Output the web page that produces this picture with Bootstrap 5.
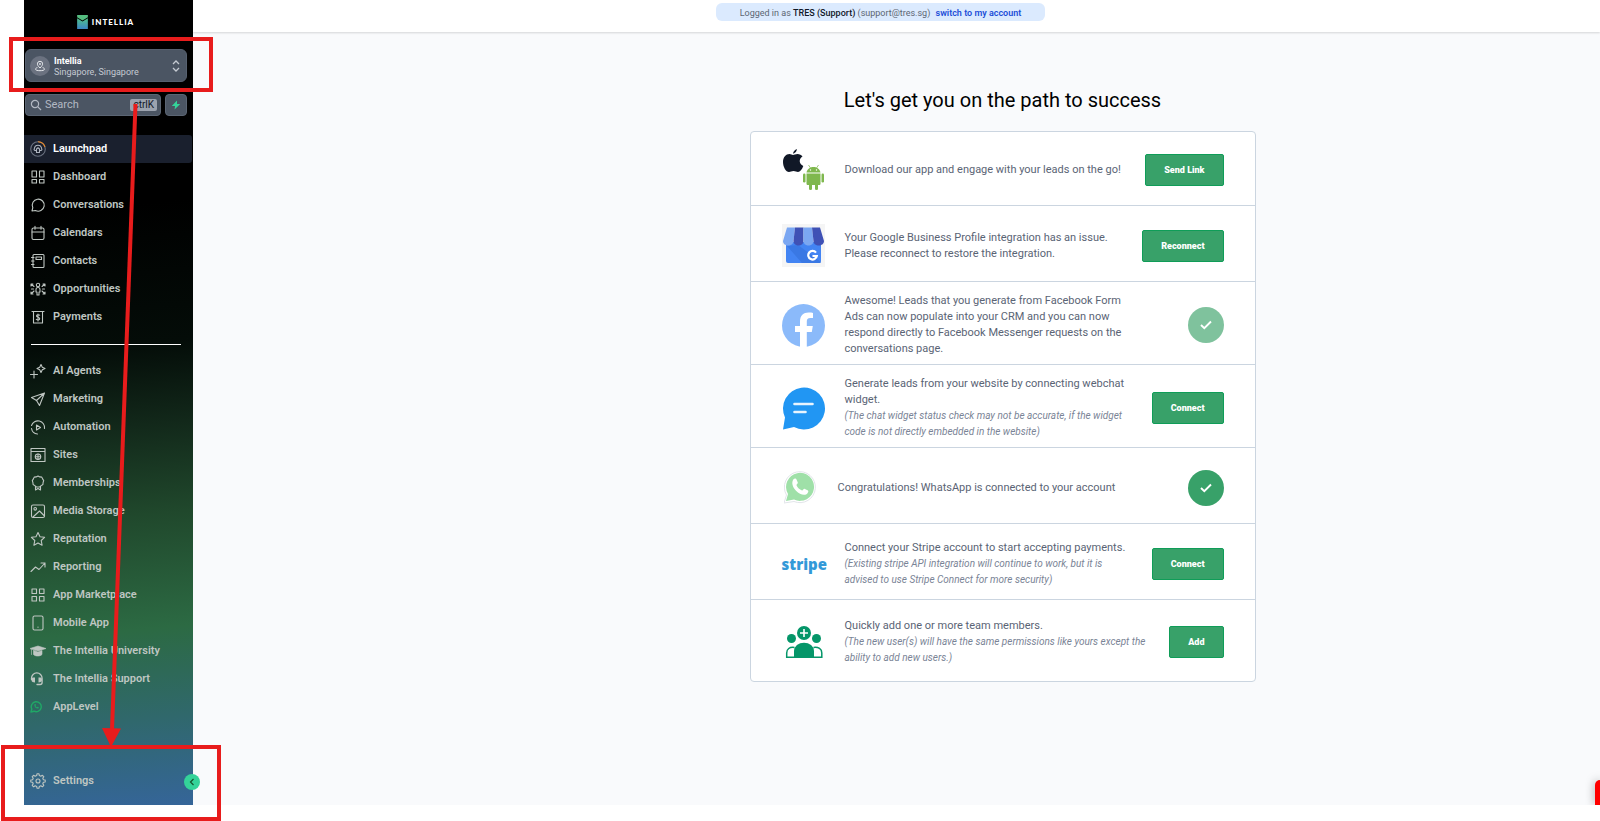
<!DOCTYPE html>
<html lang="en">
<head>
<meta charset="utf-8">
<meta name="viewport" content="width=device-width, initial-scale=1">
<title>Intellia – Launchpad</title>
<link href="https://cdn.jsdelivr.net/npm/bootstrap@5.3.0/dist/css/bootstrap.min.css" rel="stylesheet">
<style>
  body { font-family: Roboto, "Liberation Sans", sans-serif; background: #fff; font-size: 11px; }
  svg { display: block; flex-shrink: 0; }
  .app-shell { min-height: calc(100vh - 16px); padding-left: 24px; }

  /* Sidebar */
  .side-bar { width: 169px; background: linear-gradient(175deg, #000 0%, #000 26%, #040c08 43%, #12281a 53%, #20482c 64%, #2c6a43 78%, #30686c 89%, #356599 100%); }
  .brand-row { height: 49px; padding: 14px 6px 0 0; }
  .brand-text { color: #fff; font: 900 8px/16px Lato, sans-serif; letter-spacing: 1px; }
  .acct-btn { height: 33px; margin: 0 6px 0 1px; padding: 1px 6px 0 4px; background: #4b5563; border: 1px solid #56606f; border-radius: 6px; color: #c5cad2; font-size: 9px; line-height: 11px; text-align: left; }
  .acct-btn b { color: #fff; font-weight: 700; }
  .acct-name { padding-top: 2px; }
  .acct-pin { width: 20px; height: 20px; border-radius: 50%; background: #6b7280; }
  .find-row { margin: 12px 6px 0 1px; gap: 4px; }
  .find-box { height: 22px; background: #4b5563; border: 1px solid #5b6573; border-radius: 4px; padding: 0 3px 0 4px; min-width: 0; }
  .find-box input { min-width: 0; width: 60px; background: none; border: 0; outline: 0; padding: 0 0 0 3px; color: #fff; font-size: 11px; line-height: 16px; }
  .find-box input::placeholder { color: #b3b9c3; opacity: 1; }
  .find-box kbd { background: #9ca3af; color: #111827; font: 10px/12px Roboto, sans-serif; padding: 0 3px; border-radius: 2px; }
  .bolt-btn { width: 22px; height: 22px; background: #4b5563; border: 1px solid #5b6573; border-radius: 4px; padding: 0; }
  .menu-list { margin-top: 19px; }
  .menu-item { display: flex; align-items: center; height: 28px; padding-left: 6px; gap: 7px; color: #bfc6c2; text-decoration: none; font-size: 11px; font-weight: 600; line-height: 16px; white-space: nowrap; }
  .menu-item svg { width: 16px; height: 16px; fill: none; stroke: currentColor; stroke-width: 1.1; stroke-linecap: round; stroke-linejoin: round; }
  .menu-item.current { background: #1a202e; color: #fff; border-radius: 0 3px 3px 0; margin-right: 1px; }
  .menu-rule { border: 0; border-top: 1px solid #fff; opacity: 1; margin: 13px 12px 12px 7px; }
  .menu-foot { margin: auto 0 10px; }
  .fold-btn { position: absolute; right: -7px; bottom: 15px; width: 16px; height: 16px; padding: 0; border: 0; border-radius: 50%; background: #34d399; }

  /* Main area */
  .main-area { background: #f9fafc; }
  .top-strip { height: 32px; background: #fff; box-shadow: 0 1px 2px rgba(0,0,0,.15); padding: 3px 32px 0 0; }
  .login-pill { height: 18px; padding: 0 24px; background: #dbeafe; border-radius: 6px; font-size: 9px; line-height: 20px; color: #5c6672; }
  .login-pill b { color: #111827; font-weight: 500; }
  .login-pill a { color: #1d4ed8; font-weight: 600; text-decoration: none; margin-left: 3px; }
  .stage { padding-left: 212px; }
  .stage h1 { font-size: 20px; font-weight: 400; line-height: 24px; color: #000; margin: 56px 0 19px; }
  .step-card { width: 506px; max-width: 100%; background: #fff; border: 1px solid #cbd5e0; border-radius: 4px; }
  .step { min-height: 76px; padding: 4px 31px 0; border-bottom: 1px solid #cbd5e0; }
  .step.slim { min-height: 74px; padding-top: 2px; }
  .step.tall { min-height: 83px; }
  .step:last-child { border-bottom: 0; min-height: 81px; padding-top: 2px; }
  .step-pic { width: 43px; margin-right: 20px; flex-shrink: 0; }
  .step-text { width: 292px; margin: 0; font-size: 11px; line-height: 16px; color: #5a6475; }
  .step-text.roomy { width: 304px; }
  .step-text em { display: block; font-size: 10px; color: #7a8496; }
  .act-btn { height: 32px; padding: 0 18px; border: 1px solid #0f9d58; background: #38a169; color: #fff; border-radius: 2px; font-size: 9px; font-weight: 900; line-height: 28px; }
  .done-dot { width: 36px; height: 36px; border-radius: 50%; background: #38a169; }
  .faded { background: #7fc29d; }
  .chat-mark { margin: 0 18px 0 2px; }
  .stripe-word { font: 800 15px/20px "Open Sans", sans-serif; color: #3399d8; }

  /* Callouts drawn over the page */
  .callout { position: absolute; border: 4px solid #e81c1c; pointer-events: none; }
  .callout-a { left: 9px; top: 37px; width: 204px; height: 55px; }
  .callout-b { left: 1px; bottom: 0; width: 220px; height: 76px; }
  .callout-arrow { position: absolute; left: 100px; top: 100px; pointer-events: none; }
  .chat-tab { position: absolute; right: 0; bottom: 0; width: 5px; height: 25px; background: #f00; border-radius: 5px 0 0 0; box-shadow: 0 0 10px rgba(0,0,0,.4); clip-path: inset(-20px 0 0 -20px); }
</style>
</head>
<body>
<div class="position-relative min-vh-100">
<div class="app-shell d-flex position-relative">
  <aside class="side-bar d-flex flex-column flex-shrink-0 position-relative">
    <div class="brand-row d-flex justify-content-center align-items-start">
      <svg width="11" height="15" viewBox="0 0 10 14" class="me-1"><defs><linearGradient id="lg" x1="0" y1="0" x2="0" y2="1"><stop offset="0" stop-color="#4fc28a"/><stop offset="1" stop-color="#3d86c6"/></linearGradient></defs><path d="M0 1h10v2L5 6 0 3z" fill="#55bd80"/><path d="M0 4l5 3 5-3v10H0z" fill="url(#lg)"/></svg>
      <span class="brand-text">INTELLIA</span>
    </div>
    <button type="button" class="acct-btn d-flex align-items-center">
      <span class="acct-pin d-flex align-items-center justify-content-center me-1"><svg width="12" height="12" viewBox="0 0 12 12" fill="none" stroke="#e5e7eb"><path d="M6 8C4 6 3.400 5 3.400 3.900a2.600 2.600 0 0 1 5.200 0C8.600 5 8 6 6 8z"/><circle cx="6" cy="4" r=".6"/><path d="M3.400 7.500C2 8 1.500 8.500 1.500 9.200c0 1 2 1.500 4.500 1.500s4.500-.5 4.500-1.500c0-.7-.5-1.200-1.900-1.700"/></svg></span>
      <span class="acct-name flex-grow-1"><b class="d-block">Intellia</b>Singapore, Singapore</span>
      <svg width="8" height="12" viewBox="0 0 8 12" fill="none" stroke="#c5cad2" stroke-width="1.300"><path d="M1 4l3-3 3 3M1 8l3 3 3-3"/></svg>
    </button>
    <div class="find-row d-flex">
      <label class="find-box d-flex align-items-center flex-grow-1">
        <svg width="12" height="12" viewBox="0 0 12 12" fill="none" stroke="#b3b9c3" stroke-width="1.200"><circle cx="5" cy="5" r="3.600"/><path d="M7.700 7.700L11 11"/></svg>
        <input type="text" placeholder="Search" aria-label="Search">
        <kbd class="ms-auto">ctrlK</kbd>
      </label>
      <button type="button" class="bolt-btn d-flex align-items-center justify-content-center" aria-label="Quick actions"><svg width="10" height="10" viewBox="0 0 10 10"><path d="M6 .5L.8 6H4l-.4 3.500L9.200 4H6z" fill="#34d399"/></svg></button>
    </div>

    <nav class="menu-list" aria-label="Main">
      <a href="#" class="menu-item current"><svg viewBox="0 0 16 16"><circle cx="8" cy="8" r="7.300" stroke="#6b7280"/><path d="M8.500.7A7.300 7.300 0 0 1 14.800 5.500" stroke="#f08a24"/><path d="M6.500 9.500H5a1 1 0 0 1-.8-1.300C4.500 6 6 4.300 8 4.300S11.500 6 11.800 8.200A1 1 0 0 1 11 9.500H9.500M6.500 8v3.500h3V8L8 6.800z" stroke="#aeb4bf"/></svg>Launchpad</a>
      <a href="#" class="menu-item"><svg viewBox="0 0 16 16"><path d="M2 2h4.500v6H2zM9.500 2H14v6H9.500zM2 10.500h4.500V14H2zM9.500 10.500H14V14H9.500z"/></svg>Dashboard</a>
      <a href="#" class="menu-item"><svg viewBox="0 0 16 16"><path d="M2 14l.8-3.300A6 6 0 1 1 5.500 13.500z"/></svg>Conversations</a>
      <a href="#" class="menu-item"><svg viewBox="0 0 16 16"><rect x="2" y="3" width="12" height="11.500" rx="1.500"/><path d="M2 7h12M5 1.200v3M11 1.200v3"/></svg>Calendars</a>
      <a href="#" class="menu-item"><svg viewBox="0 0 16 16"><rect x="3" y="1.500" width="11" height="13" rx="1"/><path d="M6 4h5.500v2.500H6zM1.500 4.500H4M1.500 8H4M1.500 11.500H4"/></svg>Contacts</a>
      <a href="#" class="menu-item"><svg viewBox="0 0 16 16"><circle cx="8" cy="4" r="1.700"/><path d="M6 11V8.500a2 2 0 0 1 4 0V11H9v3H7v-3zM1 5V3h2M1 3l3 2.500M15 5V3h-2M15 3l-3 2.500M1 11v2h2M1 13l3-3M15 11v2h-2M15 13l-3-3M1.500 8h2M12.500 8h2"/></svg>Opportunities</a>
      <a href="#" class="menu-item"><svg viewBox="0 0 16 16"><path d="M2 2.500h12M3.500 2.500v11.500h9V2.500M9.700 6.200C9 5.600 6.500 5.500 6.500 7S9.700 8 9.700 9.700 7 11 6.300 10.300M8 5v7"/></svg>Payments</a>
      <hr class="menu-rule">
      <a href="#" class="menu-item"><svg viewBox="0 0 16 16"><path d="M11 1.500l1.300 2.700L15 5.500l-2.700 1.300L11 9.500 9.700 6.800 7 5.500l2.700-1.300zM4 8v7M.5 11.500h7"/></svg>AI Agents</a>
      <a href="#" class="menu-item"><svg viewBox="0 0 16 16"><path d="M14.500 2L1.500 6.500l5 3 3 5zM14.500 2l-8 7.500"/></svg>Marketing</a>
      <a href="#" class="menu-item"><svg viewBox="0 0 16 16"><path d="M1.500 6.500A6.700 6.700 0 0 1 14.500 9.500M1.500 9.500A6.700 6.700 0 0 0 7.500 15M6.500 6v5l4-2.500z"/></svg>Automation</a>
      <a href="#" class="menu-item"><svg viewBox="0 0 16 16"><path d="M1 1.500h14v13H1zM1 4.500h14"/><circle cx="8" cy="9.700" r="2.700"/><path d="M5.300 9.700h5.400M8 7v5.400"/></svg>Sites</a>
      <a href="#" class="menu-item"><svg viewBox="0 0 16 16"><path d="M8 1l1.800.9 2 .2.800 1.800 1.100 1.700-.6 1.900-.2 2-1.700 1.100L9.600 12H6.400l-1.600-1.400-1.700-1.100-.2-2-.6-1.900 1.100-1.700.8-1.800 2-.2zM5.500 11.500V15L8 13.500l2.500 1.500v-3.500"/></svg>Memberships</a>
      <a href="#" class="menu-item"><svg viewBox="0 0 16 16"><rect x="1.500" y="2" width="13" height="12.500" rx="1.500"/><circle cx="5.200" cy="5.800" r="1.300"/><path d="M3 14l6.500-6 5 5"/></svg>Media Storage</a>
      <a href="#" class="menu-item"><svg viewBox="0 0 16 16"><path d="M8 1.500l2 4.300 4.600.5-3.400 3.200.9 4.700L8 11.900l-4.100 2.300.9-4.700L1.400 6.300 6 5.800z"/></svg>Reputation</a>
      <a href="#" class="menu-item"><svg viewBox="0 0 16 16"><path d="M1 12.500L5.500 8 9 10.500l6-6.500M11 4h4v4"/></svg>Reporting</a>
      <a href="#" class="menu-item"><svg viewBox="0 0 16 16"><path d="M2 2h4.500v4.500H2zM9.500 2H14v4.500H9.500zM2 9.500h4.500V14H2zM9.500 9.500H14V14H9.500z"/></svg>App Marketplace</a>
      <a href="#" class="menu-item"><svg viewBox="0 0 16 16"><rect x="3" y="1" width="10" height="14" rx="1.500"/><path d="M8 12v.3"/></svg>Mobile App</a>
      <a href="#" class="menu-item"><svg viewBox="0 0 16 16"><path d="M0 5.500L8 3l8 2.500L8 8zM3.500 7.500v4c2 2 6.500 2 8.500 0v-4L8 9zM1.500 6.500v5" fill="currentColor" stroke-width=".6"/></svg>The Intellia University</a>
      <a href="#" class="menu-item"><svg viewBox="0 0 16 16"><path d="M1.500 8.500V7.200a5.200 5.200 0 0 1 10.600 0v4.300c0 1.300-.8 2-2 2H7" stroke-width="1.300"/><path d="M3 6.500h2v5C3 11.500 1.500 10.800 1.500 9S2.200 6.500 3 6.500zM8.500 6.500h2C11.500 6.500 12 7.500 12 9s-1.500 2.500-3.500 2.500z" fill="currentColor" stroke="none"/></svg>The Intellia Support</a>
      <a href="#" class="menu-item"><svg viewBox="0 0 16 16"><path d="M1 13l.8-3A5 5 0 1 1 4 12.200z" stroke="#20a866" stroke-width="1.400"/><path d="M4.300 5.500C4 8 6.500 10 8.300 9.500l.7-1-1.500-.8-.6.600C6.200 8 5.700 7.500 5.500 6.800l.6-.6-.7-1.500z" fill="#20a866" stroke="none"/></svg>AppLevel</a>
    </nav>
    <a href="#" class="menu-item menu-foot"><svg viewBox="0 0 16 16"><circle cx="8" cy="8" r="2"/><path d="M6.700 2.600L7 .8h2l.3 1.800 1.500.7 1.600-1 1.400 1.400-1 1.600.6 1.400 1.800.3v2l-1.800.3-.6 1.500 1 1.600-1.400 1.400-1.600-1-1.500.6L9 15.200H7l-.3-1.800-1.500-.6-1.600 1-1.400-1.400 1-1.600-.6-1.500L.8 9V7l1.800-.3.6-1.400-1-1.600 1.400-1.400 1.600 1z"/></svg>Settings</a>
    <button type="button" class="fold-btn d-flex align-items-center justify-content-center" aria-label="Collapse menu"><svg width="6" height="8" viewBox="0 0 6 8" fill="none" stroke="#14532d" stroke-width="1.200"><path d="M4.500 1l-3 3 3 3"/></svg></button>
  </aside>

  <main class="main-area flex-grow-1">
    <header class="top-strip d-flex justify-content-center align-items-start">
      <div class="login-pill">Logged in as <b>TRES (Support)</b> (support@tres.sg) <a href="#">switch to my account</a></div>
    </header>
    <div class="stage d-flex flex-column align-items-center">
      <h1>Let's get you on the path to success</h1>
      <section class="step-card">
        <div class="step slim d-flex align-items-center">
          <svg class="step-pic" height="44" viewBox="0 0 43 44"><path d="M11 5.500c.4-2 2-4 3.800-4.500.2 2-1.600 4.500-3.800 4.500zM1 14c0-5 3-8 6.500-8 1.500 0 2.500 1 3.500 1s2.500-1 4.500-1c2 0 4 1 5 2.500-4 2.500-3.500 7.500.8 9.500C20 21.500 18 24 16 24c-1.500 0-2.500-1-4.500-1s-3 1-4.500 1C4 24 1 19 1 14z" fill="#111827"/><g fill="#7fb84e"><path d="M24.500 24.500c.5-3 3-5.500 7-5.500s6.500 2.500 7 5.500zM24.500 25.500h14v10c0 1-.5 1.500-1.500 1.500h-11c-1 0-1.500-.5-1.500-1.500z"/><rect x="21" y="25.500" width="2.500" height="9" rx="1.200"/><rect x="39.500" y="25.500" width="2.500" height="9" rx="1.200"/><rect x="27" y="34" width="3" height="8" rx="1.300"/><rect x="33" y="34" width="3" height="8" rx="1.300"/></g><path d="M26.500 17l2 3M36.500 17l-2 3" stroke="#7fb84e" stroke-width=".7"/><circle cx="28.500" cy="22" r=".7" fill="#fff"/><circle cx="34.500" cy="22" r=".7" fill="#fff"/></svg>
          <p class="step-text">Download our app and engage with your leads on the go!</p>
          <button type="button" class="act-btn ms-auto">Send Link</button>
        </div>
        <div class="step d-flex align-items-center">
          <svg class="step-pic" height="43" viewBox="0 0 43 43"><path fill="#f5f5f5" d="M0 0h43v43H0z"/><path d="M4 18h35v19a2 2 0 0 1-2 2H6a2 2 0 0 1-2-2z" fill="#4384f3"/><path d="M16 21l23 17-1 1H20L5 22z" fill="#3a78e4"/><path d="M5 3.500h8L11.500 17c0 6-10.500 6-10.500 0z" fill="#7ba7f2"/><path d="M13 3.500h8.500V17c0 6-10 6-10 0z" fill="#3f51b5"/><path d="M21.500 3.500H30L31.500 17c0 6-10 6-10 0z" fill="#7ba7f2"/><path d="M30 3.500h8L42 17c0 6-10.500 6-10.500 0z" fill="#3f51b5"/><path d="M34 28.600a4.300 4.300 0 1 0 .8 3.400h-4.300" fill="none" stroke="#fff" stroke-width="2.200"/></svg>
          <p class="step-text">Your Google Business Profile integration has an issue. Please reconnect to restore the integration.</p>
          <button type="button" class="act-btn ms-auto">Reconnect</button>
        </div>
        <div class="step tall d-flex align-items-center">
          <svg class="step-pic" height="43" viewBox="0 0 43 43"><circle cx="21.500" cy="21.500" r="21.500" fill="#8bbafa"/><path d="M18 43V28h-5v-6h5v-4.500c0-6 3.500-9 8.500-9 2 0 3.500.2 4.500.4v5h-2.700c-2.700 0-3.500 1.500-3.500 3.300V22h6l-1 6h-5v15z" fill="#fff"/></svg>
          <p class="step-text">Awesome! Leads that you generate from Facebook Form Ads can now populate into your CRM and you can now respond directly to Facebook Messenger requests on the conversations page.</p>
          <span class="done-dot faded ms-auto d-flex align-items-center justify-content-center"><svg width="12" height="10" viewBox="0 0 12 10" fill="none" stroke="#fff" stroke-width="1.900"><path d="M1 5l3.300 3.200L11 1.500"/></svg></span>
        </div>
        <div class="step tall d-flex align-items-center">
          <svg class="step-pic" height="44" viewBox="0 0 43 44"><path d="M1 43.500l2-12A21 21 0 1 1 12 41z" fill="#2196f3"/><path d="M12.500 18h18M12.500 26h11" stroke="#e8f4fe" stroke-width="2.600" stroke-linecap="round"/></svg>
          <p class="step-text">Generate leads from your website by connecting webchat widget.<em>(The chat widget status check may not be accurate, if the widget code is not directly embedded in the website)</em></p>
          <button type="button" class="act-btn ms-auto">Connect</button>
        </div>
        <div class="step d-flex align-items-center">
          <svg width="36" height="34" viewBox="0 0 36 34" class="chat-mark"><path d="M0 32l2.500-8A15.500 15.500 0 1 1 10 30.500z" fill="#fff" stroke="#e2e5ea"/><path d="M2 30l2-7A14 14 0 1 1 10 28.500z" fill="#9fe0a8"/><path d="M9 9c1-1.500 3-2 3.500-.5l1.300 3c.3 1-1.500 2-1.300 2.700 1 2.300 3 4.300 5.500 5.300.8.200 1.800-2 2.500-1.700l3.500 1.700c1 .6-.3 3-1.500 3.700-3 1.500-7 0-10.500-3.500C8.500 16 7.500 12 9 9z" fill="#fff"/></svg>
          <p class="step-text">Congratulations! WhatsApp is connected to your account</p>
          <span class="done-dot ms-auto d-flex align-items-center justify-content-center"><svg width="12" height="10" viewBox="0 0 12 10" fill="none" stroke="#fff" stroke-width="1.900"><path d="M1 5l3.300 3.200L11 1.500"/></svg></span>
        </div>
        <div class="step d-flex align-items-center">
          <span class="step-pic stripe-word">stripe</span>
          <p class="step-text">Connect your Stripe account to start accepting payments.<em>(Existing stripe API integration will continue to work, but it is advised to use Stripe Connect for more security)</em></p>
          <button type="button" class="act-btn ms-auto">Connect</button>
        </div>
        <div class="step d-flex align-items-center">
          <svg class="step-pic" height="32" viewBox="0 0 43 32"><g fill="#059669"><circle cx="22" cy="7" r="7"/><circle cx="9.500" cy="12.500" r="4.500"/><circle cx="34.500" cy="12.500" r="4.500"/><path d="M12 32v-7a9 7.500 0 0 1 20 0v7z"/></g><path d="M12.500 31.200H4.700V27c0-4 2.800-6.200 7.800-5.500M31.500 31.200h8.300V27c0-4-3.300-6.200-8.300-5.500" fill="none" stroke="#059669" stroke-width="1.500"/><path d="M22 3v8M18 7h8" stroke="#fff" stroke-width="1.600"/></svg>
          <p class="step-text roomy">Quickly add one or more team members.<em>(The new user(s) will have the same permissions like yours except the ability to add new users.)</em></p>
          <button type="button" class="act-btn ms-auto">Add</button>
        </div>
      </section>
    </div>
  </main>
  <div class="chat-tab"></div>
</div>
<div class="callout callout-a"></div>
<div class="callout callout-b"></div>
<svg class="callout-arrow" width="40" height="648" viewBox="0 0 40 648"><path d="M35.500 4L12 630" stroke="#e81c1c" stroke-width="4"/><path d="M2 628l19 .5L11 647z" fill="#e81c1c"/></svg>
</div>
<script src="https://cdn.jsdelivr.net/npm/bootstrap@5.3.0/dist/js/bootstrap.bundle.min.js"></script>
</body>
</html>
